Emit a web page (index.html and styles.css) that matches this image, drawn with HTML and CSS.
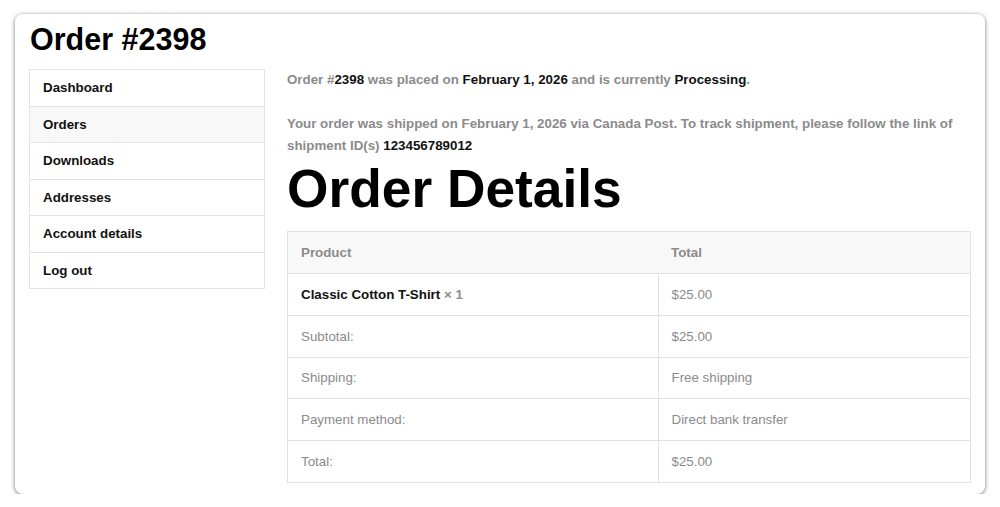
FILE: index.html
```html
<!DOCTYPE html>
<html>
<head>
<meta charset="utf-8">
<link rel="stylesheet" href="styles.css">
</head>
<body>
<div class="card">
  <h1 class="title">Order #2398</h1>
  <div class="layout">
    <nav class="nav">
      <a class="nav-item">Dashboard</a>
      <a class="nav-item active">Orders</a>
      <a class="nav-item">Downloads</a>
      <a class="nav-item">Addresses</a>
      <a class="nav-item">Account details</a>
      <a class="nav-item">Log out</a>
    </nav>
    <main class="main">
      <p class="info">Order #<mark>2398</mark> was placed on <mark>February 1, 2026</mark> and is currently <mark>Processing</mark>.</p>
      <p class="info">Your order was shipped on February 1, 2026 via Canada Post. To track shipment, please follow the link of shipment ID(s) <mark>123456789012</mark></p>
      <h2 class="details">Order Details</h2>
      <table class="order-table">
        <thead>
          <tr><th class="col1">Product</th><th>Total</th></tr>
        </thead>
        <tbody>
          <tr><td><span class="prod">Classic Cotton T-Shirt</span> <span class="qty">× 1</span></td><td>$25.00</td></tr>
          <tr><td>Subtotal:</td><td>$25.00</td></tr>
          <tr><td>Shipping:</td><td>Free shipping</td></tr>
          <tr><td>Payment method:</td><td>Direct bank transfer</td></tr>
          <tr><td>Total:</td><td>$25.00</td></tr>
        </tbody>
      </table>
    </main>
  </div>
</div>
</body>
</html>
```

FILE: styles.css
```css
html, body {
  margin: 0;
  padding: 0;
  background: #ffffff;
}
body {
  font-family: "Liberation Sans", Arial, sans-serif;
  color: #111;
  padding: 14px 15px 0 15px;
}
.card {
  background: #fff;
  border-radius: 8px;
  box-shadow: 0 1px 4px rgba(0, 0, 0, 0.55);
  height: 480px;
  box-sizing: border-box;
  padding: 7px 14px 0 14px;
}
.title {
  margin: 0 0 0 1px;
  font-size: 30.5px;
  line-height: 36px;
  font-weight: bold;
  color: #000;
}
.layout {
  display: flex;
  gap: 22px;
  margin-top: 12px;
}
.nav {
  width: 236px;
  flex: none;
  border: 1px solid #e4e4e4;
  box-sizing: border-box;
  align-self: flex-start;
  display: flex;
  flex-direction: column;
}
.nav-item {
  display: block;
  height: 36.5px;
  line-height: 35px;
  padding-left: 13px;
  font-size: 13.33px;
  font-weight: bold;
  color: #111;
  border-top: 1px solid #e4e4e4;
  box-sizing: border-box;
}
.nav-item:first-child {
  border-top: none;
  height: 35.5px;
}
.nav-item.active {
  background: #f8f8f8;
}
.main {
  flex: 1;
  min-width: 0;
}
.info {
  margin: 0 0 22px 0;
  font-size: 13.33px;
  line-height: 22px;
  font-weight: bold;
  color: #8b8b8b;
}
.info + .info {
  margin-bottom: 0;
}
.info mark {
  background: none;
  color: #111;
}
.details {
  margin: 0 0 10px 0;
  font-size: 53.3px;
  line-height: 1.2;
  font-weight: bold;
  color: #000;
}
.order-table {
  width: 100%;
  border-collapse: collapse;
  border: 1px solid #e2e2e2;
  font-size: 13.33px;
}
.order-table th,
.order-table td {
  text-align: left;
  padding: 0 13px;
  height: 40.8px;
  border-top: 1px solid #e2e2e2;
  color: #8b8b8b;
}
.order-table th {
  background: #f8f8f8;
  font-weight: bold;
  height: 41px;
}
.order-table td + td {
  border-left: 1px solid #e2e2e2;
}
.order-table .col1 {
  width: 344px;
}
.prod {
  font-weight: bold;
  color: #111;
}
.qty {
  font-weight: bold;
  color: #8b8b8b;
}
```
